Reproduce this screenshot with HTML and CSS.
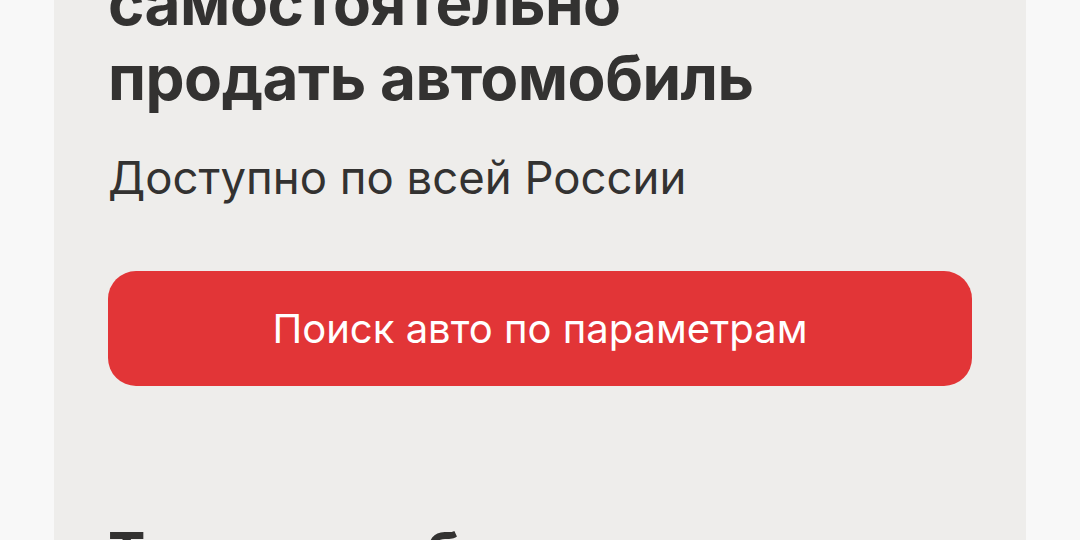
FILE: index.html
```html
<!DOCTYPE html>
<html lang="ru">
<head>
<meta charset="utf-8">
<title>Продать автомобиль</title>
<link rel="stylesheet" href="styles.css">
</head>
<body>
<main class="page">
  <section class="card">
    <h1 class="title">самостоятельно<br>продать автомобиль</h1>
    <p class="subtitle">Доступно по всей России</p>
    <button class="search-btn" type="button">Поиск авто по параметрам</button>
    <h2 class="section-title">Тип автомобиля</h2>
  </section>
</main>
</body>
</html>
```
FILE: styles.css
```css
html, body {
  margin: 0;
  padding: 0;
}
body {
  background: #f8f8f8;
  font-family: Inter, "Noto Sans", "Liberation Sans", sans-serif;
  color: #333231;
  overflow: hidden;
}
.page {
  padding: 0 54px;
}
.card {
  background: #eeedeb;
  margin-top: -35px;
  padding: 0 54px 80px;
  display: flex;
  flex-direction: column;
  align-items: stretch;
}
.title {
  margin: 0;
  font-size: 62px;
  line-height: 75px;
  font-weight: 700;
  letter-spacing: -0.5px;
}
.subtitle {
  margin: 35px 0 0;
  font-size: 45.5px;
  line-height: 56px;
  font-weight: 400;
}
.search-btn {
  margin-top: 65px;
  height: 115px;
  border: 0;
  border-radius: 28px;
  background: #e23537;
  color: #ffffff;
  font-family: inherit;
  font-size: 40px;
  font-weight: 400;
  cursor: pointer;
}
.section-title {
  margin: 134px 0 0;
  font-size: 56px;
  line-height: 66px;
  font-weight: 700;
  letter-spacing: -0.5px;
}
```
